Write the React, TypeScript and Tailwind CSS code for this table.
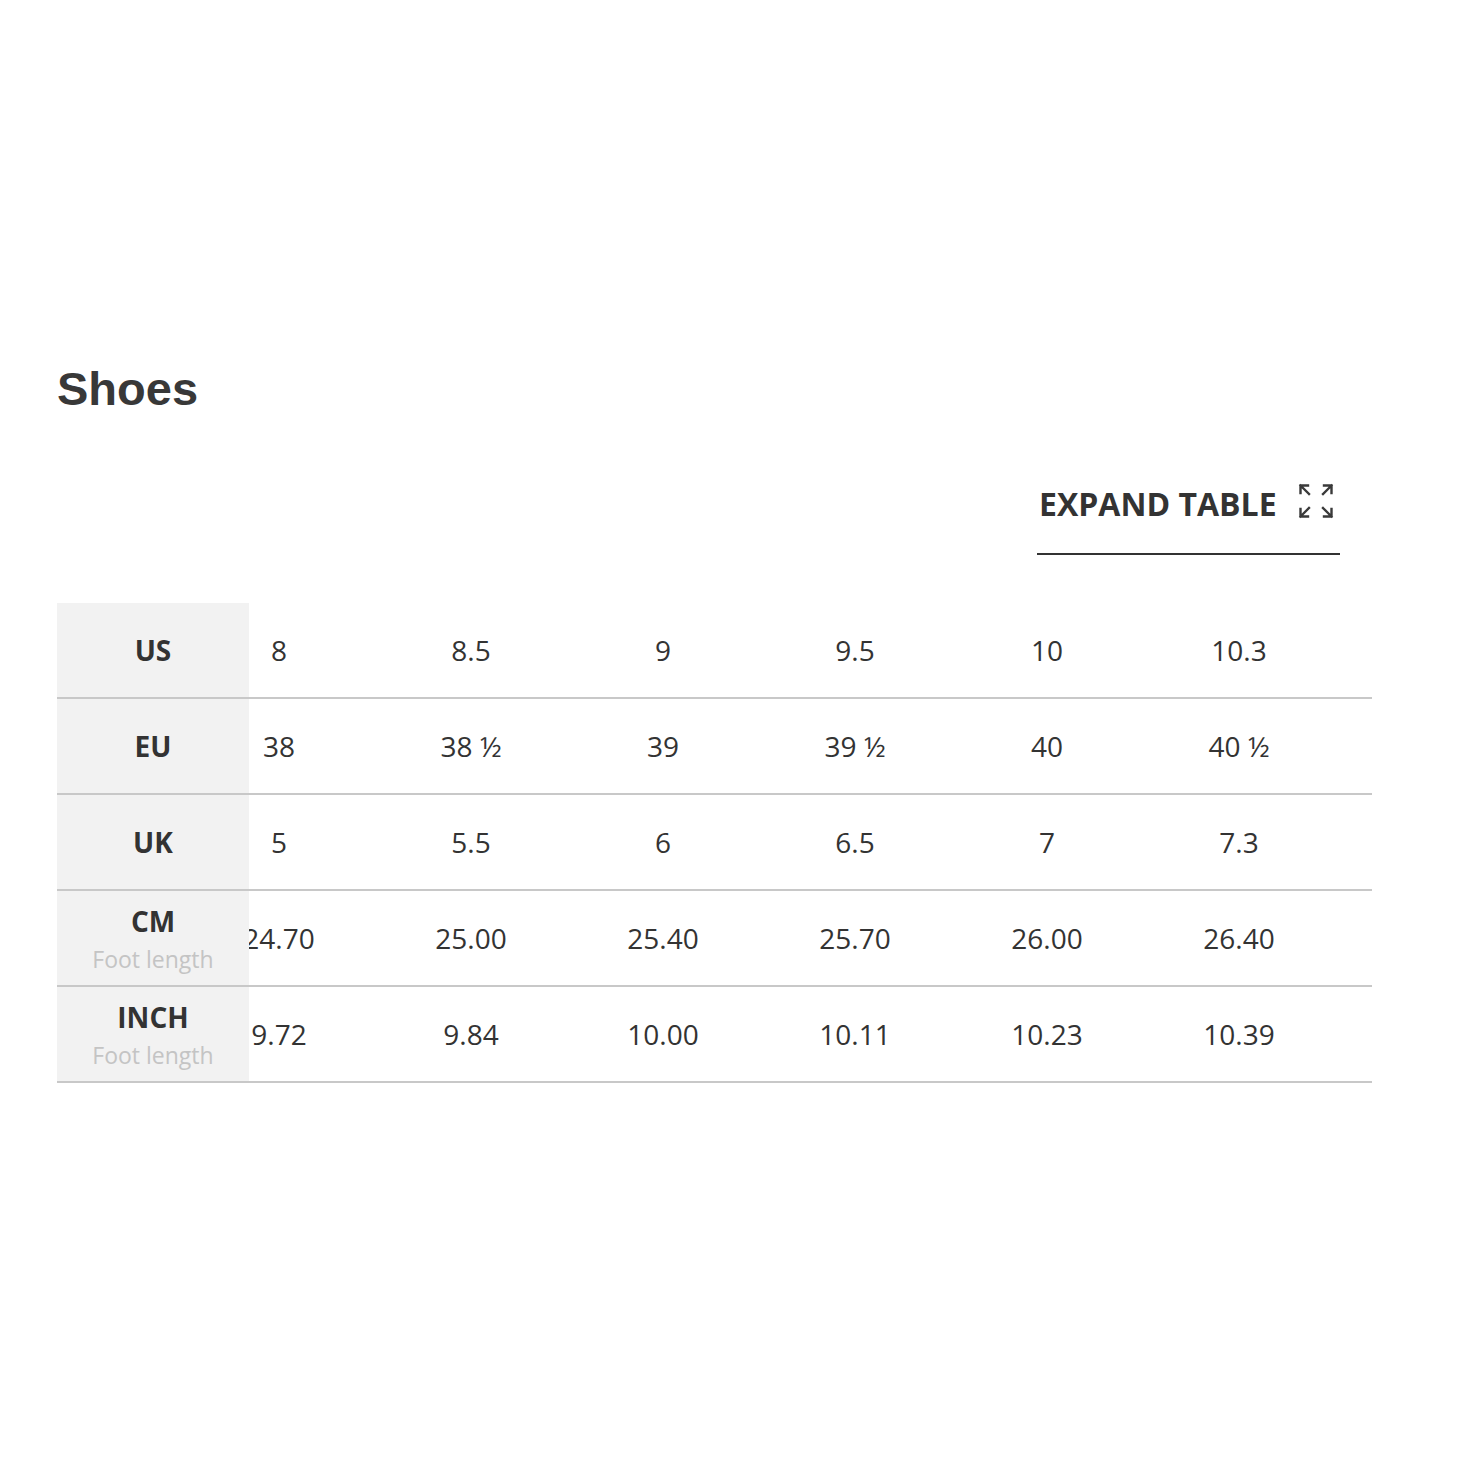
import React from "react";

const rows: { label: string; sub?: string; values: string[] }[] = [
  { label: "US", values: ["8", "8.5", "9", "9.5", "10", "10.3"] },
  { label: "EU", values: ["38", "38 ½", "39", "39 ½", "40", "40 ½"] },
  { label: "UK", values: ["5", "5.5", "6", "6.5", "7", "7.3"] },
  { label: "CM", sub: "Foot length", values: ["24.70", "25.00", "25.40", "25.70", "26.00", "26.40"] },
  { label: "INCH", sub: "Foot length", values: ["9.72", "9.84", "10.00", "10.11", "10.23", "10.39"] },
];

function ExpandIcon() {
  return (
    <svg width="36" height="36" viewBox="0 0 36 36" fill="none" stroke="#3a3a3a" strokeWidth="2.4" strokeLinecap="square">
      <path d="M11 11 L2.5 2.5 M2.5 2.5 V10 M2.5 2.5 H10" />
      <path d="M25 11 L33.5 2.5 M33.5 2.5 V10 M33.5 2.5 H26" />
      <path d="M11 25 L2.5 33.5 M2.5 33.5 V26 M2.5 33.5 H10" />
      <path d="M25 25 L33.5 33.5 M33.5 33.5 V26 M33.5 33.5 H26" />
    </svg>
  );
}

export default function App() {
  return (
    <div className="min-h-[1458px] bg-white pt-[357px] pl-[57px]" style={{ fontFamily: "'Open Sans', sans-serif" }}>
      <div className="w-[1315px]">
        <h2
          className="text-[47px] font-bold leading-[64px] text-[#383838]"
          style={{ fontFamily: "'Liberation Sans', Arial, sans-serif" }}
        >
          Shoes
        </h2>
        <div className="mt-[54px] flex justify-end pr-[32px]">
          <button className="flex h-[80px] w-[303px] items-start justify-between border-b-2 border-[#333] pl-[2px] pr-[6px]">
            <span className="mt-[9px] text-[32px] font-bold leading-[40px] text-[#333]">EXPAND TABLE</span>
            <span className="mt-[8px]">
              <ExpandIcon />
            </span>
          </button>
        </div>
        <div className="mt-[48px]">
          {rows.map((r) => (
            <div key={r.label} className="flex h-[96px] border-b-2 border-[#c8c8c8]">
              <div
                className={
                  r.sub
                    ? "flex w-[192px] shrink-0 flex-col items-center justify-center bg-[#f2f2f2] pt-[4px]"
                    : "flex w-[192px] shrink-0 flex-col items-center justify-center bg-[#f2f2f2]"
                }
              >
                <div className="text-[28px] font-bold leading-[38px] text-[#333]">{r.label}</div>
                {r.sub && <div className="text-[23px] leading-[38px] text-[#c4c4c4]">{r.sub}</div>}
              </div>
              <div className="flex-1 overflow-hidden">
                <div className="ml-[-66px] flex h-full">
                  {r.values.map((v, i) => (
                    <div key={i} className="flex w-[192px] shrink-0 items-center justify-center text-[28px] text-[#333]">
                      {v}
                    </div>
                  ))}
                </div>
              </div>
            </div>
          ))}
        </div>
      </div>
    </div>
  );
}
